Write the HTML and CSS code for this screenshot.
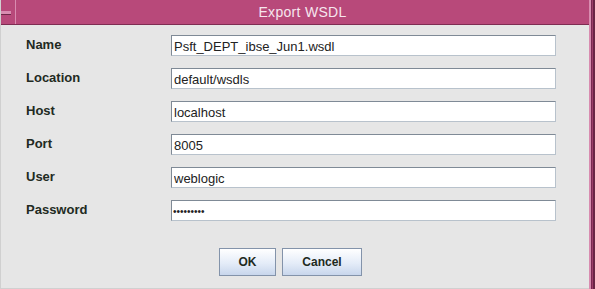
FILE: index.html
```html
<!DOCTYPE html>
<html lang="en">
  <head>
    <meta charset="UTF-8" />
    <title>Export WSDL</title>
    <link rel="stylesheet" href="styles.css">
  </head>
  <body>
    <div class="dialog">
      <div class="main">
        <div class="titlebar">
          <div class="menu"><span class="dash"></span></div>
          <div class="title">Export WSDL</div>
        </div>

        <form class="fields">
          <label for="name">Name</label>
          <input type="text" id="name" value="Psft_DEPT_ibse_Jun1.wsdl" />

          <label for="location">Location</label>
          <input type="text" id="location" value="default/wsdls" />

          <label for="host">Host</label>
          <input type="text" id="host" value="localhost" />

          <label for="port">Port</label>
          <input type="text" id="port" value="8005" />

          <label for="user">User</label>
          <input type="text" id="user" value="weblogic" />

          <label for="password">Password</label>
          <input type="password" id="password" value="weblogic1" />
        </form>

        <div class="buttons">
          <button class="btn ok">OK</button>
          <button class="btn cancel">Cancel</button>
        </div>
      </div>
      <div class="edge"></div>
    </div>
  </body>
</html>
```

FILE: styles.css
```css
html,
body {
  margin: 0;
  height: 100%;
}
body {
  background-color: #e6e6e6;
  font-family: "Liberation Sans", Arial, sans-serif;
  color: #1e2a1e;
}
.dialog {
  display: flex;
  height: 289px;
  width: 595px;
}
.main {
  flex: 1;
  display: flex;
  flex-direction: column;
  border-left: 1px solid #d0d0d0;
  border-bottom: 1px solid #d0d0d0;
}
.edge {
  width: 6px;
  background: linear-gradient(to right, #d98cb0 0 2px, #7a2a50 2px 3px, #9c3c68 3px 4px, #6a2444 4px);
}

/* title bar */
.titlebar {
  display: flex;
  height: 24px;
  background-color: #b8497a;
  border-bottom: 1px solid #7e2c52;
}
.menu {
  width: 14px;
  border-right: 1px solid #d98cb0;
  display: flex;
  align-items: center;
}
.dash {
  display: block;
  width: 10px;
  height: 3px;
  margin-top: 2px;
  background-color: #d98cb0;
  border-bottom: 1px solid #6e2848;
}
.title {
  flex: 1;
  text-align: center;
  line-height: 24px;
  font-size: 14px;
  color: #f6e6ee;
  letter-spacing: 0.3px;
}

/* fields */
.fields {
  display: grid;
  grid-template-columns: 145px 385px;
  grid-auto-rows: 21px;
  row-gap: 12px;
  align-items: center;
  margin: 10px 0 0 25px;
}
.fields label {
  font-size: 13px;
  font-weight: bold;
  color: #222a22;
  margin-top: -2px;
}
.fields input {
  box-sizing: border-box;
  height: 21px;
  width: 385px;
  margin: 0;
  padding: 1px 2px 0;
  font-family: "Liberation Sans", Arial, sans-serif;
  font-size: 13px;
  color: #222;
  background-color: #fff;
  border: 1px solid;
  border-color: #7f8a96 #b8c2cc #b8c2cc #7f8a96;
  outline: none;
}
.fields input[type="password"] {
  font-size: 10px;
  padding-left: 1px;
}

/* buttons */
.buttons {
  display: flex;
  gap: 6px;
  margin: 27px 0 0 218px;
}
.btn {
  height: 28px;
  font-family: "Liberation Sans", Arial, sans-serif;
  font-size: 12px;
  font-weight: bold;
  color: #1e2a1e;
  background: linear-gradient(#ffffff, #e4ecf8 55%, #c8d6ec);
  border: 1px solid #8393aa;
  padding: 0;
}
.ok {
  width: 57px;
}
.cancel {
  width: 80px;
}
```
